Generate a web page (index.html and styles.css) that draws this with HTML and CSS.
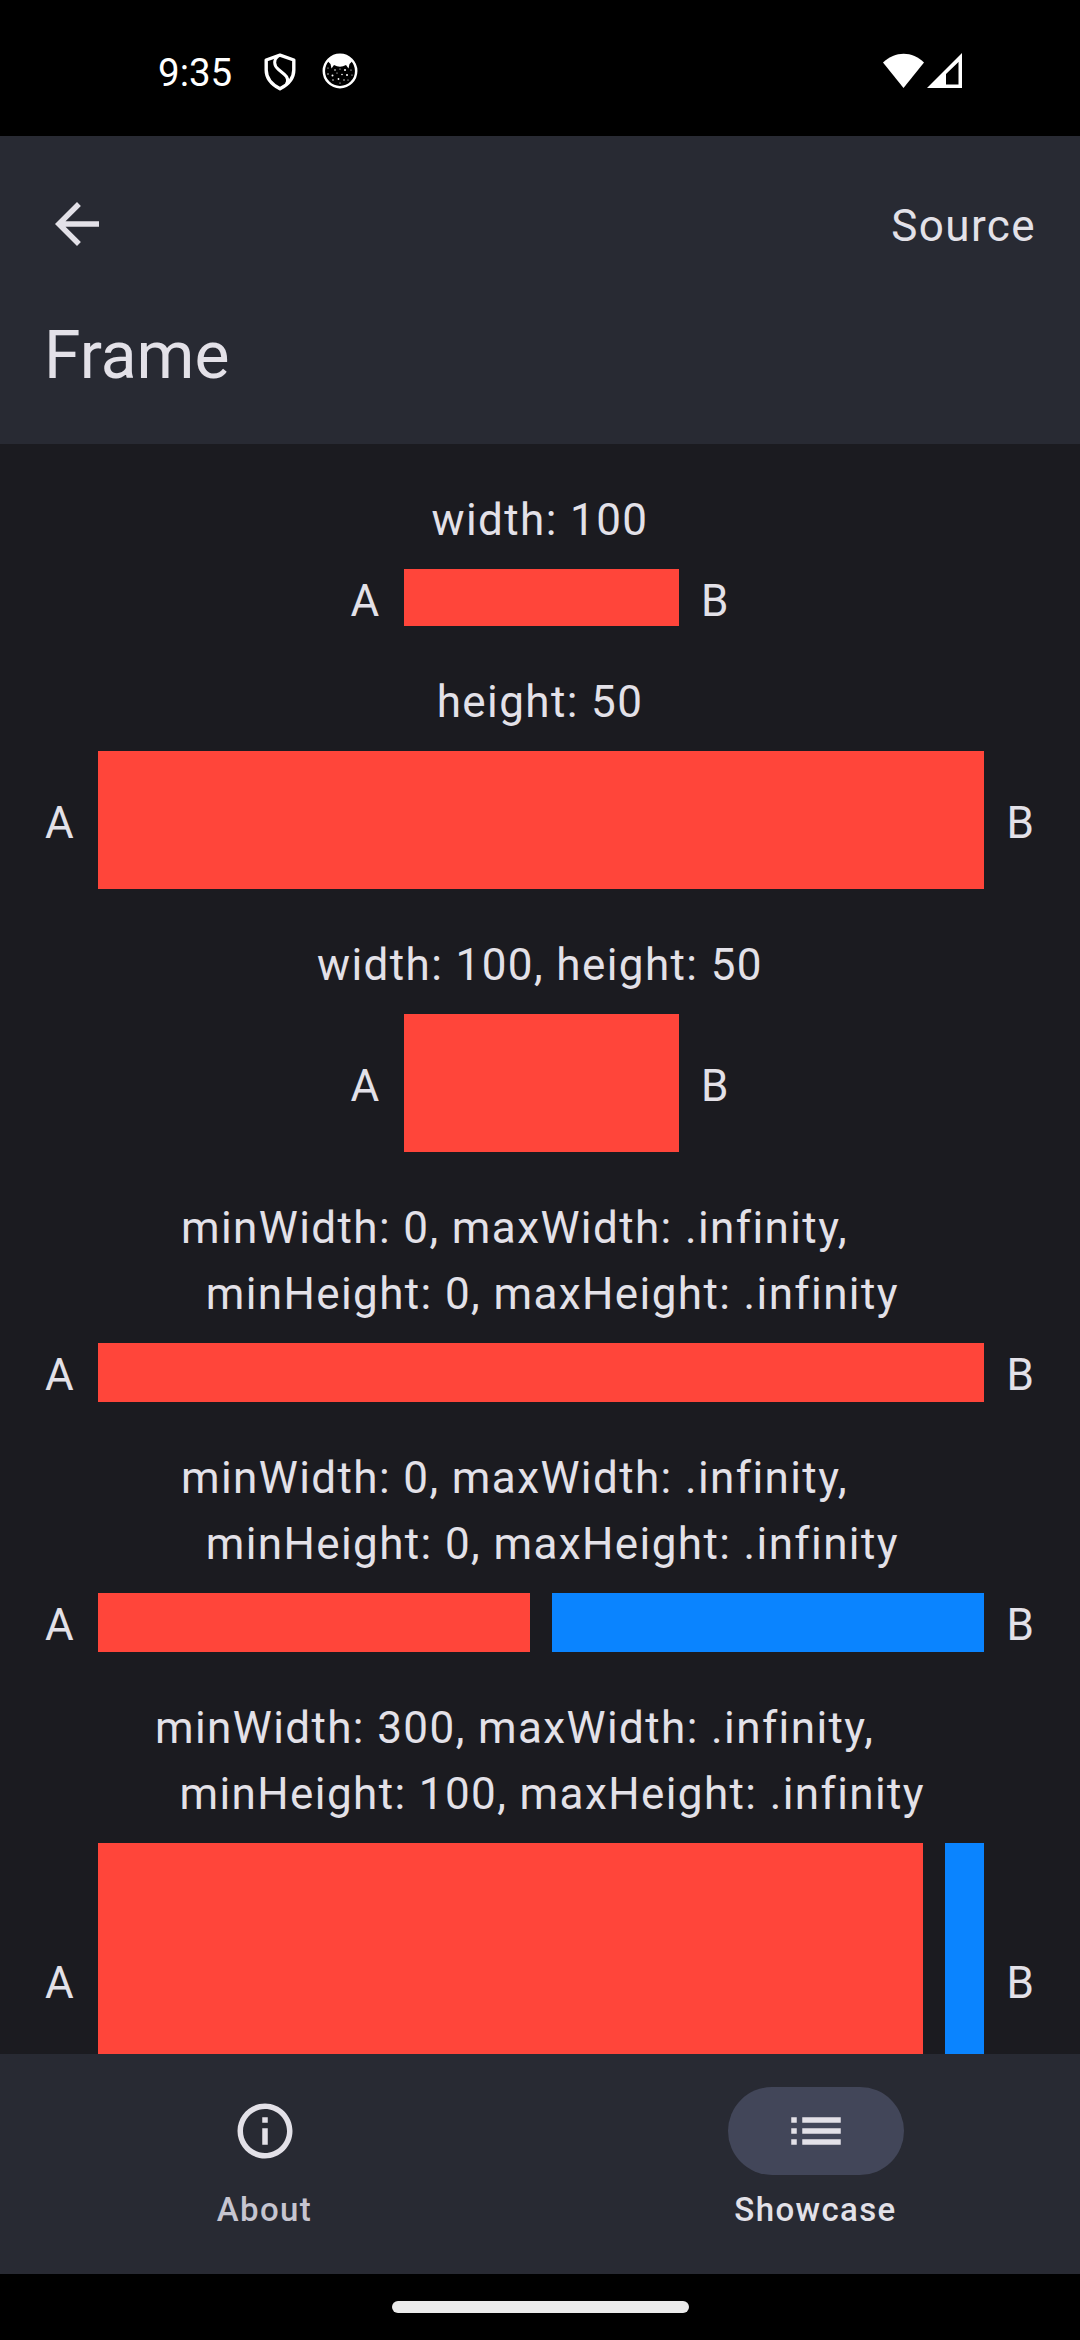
FILE: index.html
```html
<!DOCTYPE html>
<html lang="en">
<head>
<meta charset="utf-8">
<title>Frame</title>
<link rel="stylesheet" href="styles.css">
</head>
<body>
<div class="screen">
  <div class="status">
    <span class="time">9:35</span>
    <svg class="shield" width="32" height="38" viewBox="0 0 32 38" fill="none" stroke="#fff" stroke-linejoin="round">
      <path stroke-width="3.4" d="M16 2.2 2.2 7v10c0 8.500 5.500 14.500 13.800 18.800C24.300 31.500 29.800 25.500 29.800 17V7z"/>
      <path stroke-width="3" d="M14 3C9.500 7 9.500 12.500 14.500 16.500L20.500 21.500C24 24.500 24.500 27.500 22.500 31"/>
    </svg>
    <svg class="cat" width="36" height="36" viewBox="0 0 36 36">
      <circle cx="18" cy="18" r="16.200" fill="none" stroke="#fff" stroke-width="2.500"/>
      <path fill="#fff" d="M6 8.500C12-.5 24-.5 30 8.500L27.500 11 26.500 15.500 24 12Q18 15.500 12 12L9.500 15.500 8.500 11z"/>
      <g fill="#fff"><circle cx="6" cy="15" r=".6"/><circle cx="13" cy="17" r=".8"/><circle cx="18" cy="16" r=".6"/><circle cx="23" cy="17" r="1"/><circle cx="29" cy="17" r=".6"/><circle cx="6" cy="21" r=".7"/><circle cx="10.500" cy="22.500" r="1"/><circle cx="15" cy="20" r=".6"/><circle cx="20" cy="21.500" r=".8"/><circle cx="25" cy="22" r="1"/><circle cx="30" cy="22" r=".6"/><circle cx="11" cy="27" r=".7"/><circle cx="16.500" cy="26" r=".9"/><circle cx="22" cy="27" r=".7"/><circle cx="18" cy="30" r=".6"/><circle cx="26" cy="27" r=".6"/></g>
    </svg>
    <svg class="wifi" width="42" height="36" viewBox="0 0 42 36"><path fill="#fff" d="M0 9.500C12-2.300 29.500-2.300 41 9.500L20.500 35z"/></svg>
    <svg class="signal" width="36" height="36" viewBox="0 0 36 36"><path fill="#fff" fill-rule="evenodd" d="M0 35 35 0v35zM19 31.500H31.500V9L19 21z"/></svg>
  </div>
  <header class="appbar">
    <div class="tools">
      <svg width="66" height="66" viewBox="0 0 24 24" fill="currentColor"><path d="M20 11H7.830l5.590-5.590L12 4l-8 8 8 8 1.410-1.410L7.830 13H20z"/></svg>
      <span>Source</span>
    </div>
    <h1 class="title">Frame</h1>
  </header>
  <main class="content">
    <p class="caption">width: 100</p>
    <div class="row"><span class="a">A</span><i class="box w100"></i><span class="b">B</span></div>
    <p class="caption">height: 50</p>
    <div class="row h50"><span class="a">A</span><i class="box"></i><span class="b">B</span></div>
    <p class="caption">width: 100, height: 50</p>
    <div class="row h50"><span class="a">A</span><i class="box w100"></i><span class="b">B</span></div>
    <p class="caption">minWidth: 0, maxWidth: .infinity,
  minHeight: 0, maxHeight: .infinity</p>
    <div class="row fill"><span class="a">A</span><i class="box"></i><span class="b">B</span></div>
    <p class="caption">minWidth: 0, maxWidth: .infinity,
  minHeight: 0, maxHeight: .infinity</p>
    <div class="row fill"><span class="a">A</span><i class="box"></i><i class="box blue"></i><span class="b">B</span></div>
    <p class="caption">minWidth: 300, maxWidth: .infinity,
  minHeight: 100, maxHeight: .infinity</p>
    <div class="row h100"><span class="a">A</span><i class="box w300"></i><i class="box blue"></i><span class="b">B</span></div>
  </main>
  <nav class="tabs">
    <div class="tab">
      <div class="pill"><svg width="66" height="66" viewBox="0 0 24 24" fill="currentColor"><path d="M11 7h2v2h-2zm0 4h2v6h-2zm1-9C6.480 2 2 6.480 2 12s4.480 10 10 10 10-4.480 10-10S17.520 2 12 2zm0 18c-4.410 0-8-3.590-8-8s3.590-8 8-8 8 3.590 8 8-3.590 8-8 8z"/></svg></div>
      <span class="label">About</span>
    </div>
    <div class="tab active">
      <div class="pill"><svg width="66" height="66" viewBox="0 0 24 24" fill="currentColor"><path d="M3 13h2v-2H3zm0 4h2v-2H3zm0-8h2V7H3zm4 4h14v-2H7zm0 4h14v-2H7zM7 7v2h14V7z"/></svg></div>
      <span class="label">Showcase</span>
    </div>
  </nav>
  <div class="gesture"><div class="handle"></div></div>
</div>
</body>
</html>
```
FILE: styles.css
```css
* { box-sizing: border-box; }
body { margin: 0; background: #000; }
svg { display: block; flex: none; }
.screen {
  width: 1080px;
  height: 2340px;
  display: flex;
  flex-direction: column;
  overflow: hidden;
  color: #e3e1e8;
  font: 400 44px/66px Roboto, sans-serif;
  letter-spacing: 1.4px;
}
.status {
  height: 136px;
  flex: none;
  display: flex;
  align-items: flex-start;
  padding: 53px 117px 0 158px;
  color: #fff;
}
.time { width: 106px; font-size: 38.5px; line-height: 40px; letter-spacing: 0; }
.cat { margin-left: 26px; }
.wifi { margin-left: auto; }
.signal { margin-left: 2px; }
.appbar {
  height: 308px;
  flex: none;
  background: #282a33;
  padding: 55px 44px 0;
}
.tools { display: flex; justify-content: space-between; align-items: center; height: 66px; }
.tools span { padding-top: 4px; }
.title {
  margin: 55px 0 0;
  font-size: 66px;
  line-height: 88px;
  font-weight: 400;
  letter-spacing: 0;
}
.content {
  flex: 1;
  min-height: 0;
  overflow: hidden;
  background: #1b1b20;
  padding: 0 44px;
}
.caption { width: max-content; margin: 0 auto; padding: 43px 0 16px; white-space: pre; }
.row { display: flex; justify-content: center; align-items: center; gap: 22px; height: 57px; }
.row.h50 { height: 138px; }
.row.fill { height: 59px; }
.row.h100 { height: 275px; }
.a, .b { flex: none; padding-top: 6px; line-height: 50px; text-align: center; }
.fill .a, .fill .b, .h100 .a, .h100 .b { padding-top: 5px; }
.a { width: 32px; }
.b { width: 30px; }
.box { flex: 1; align-self: stretch; background: #ff453a; }
.blue { background: #0a84ff; }
.w100 { flex: none; width: 275px; }
.w300 { flex: none; width: 825px; }
.tabs {
  height: 220px;
  flex: none;
  display: flex;
  gap: 22px;
  background: #282a33;
}
.tab {
  flex: 1;
  display: flex;
  flex-direction: column;
  align-items: center;
  padding-top: 33px;
}
.pill {
  width: 176px;
  height: 88px;
  border-radius: 44px;
  display: flex;
  align-items: center;
  justify-content: center;
}
.label { margin-top: 13px; font-size: 33px; line-height: 44px; font-weight: 500; color: #c6c5d0; }
.active .pill { background: #424659; }
.active .label { color: #e3e1e8; }
.gesture { height: 66px; flex: none; display: flex; align-items: center; justify-content: center; background: #000; }
.handle { width: 297px; height: 12px; border-radius: 6px; background: #ebebeb; }
```
